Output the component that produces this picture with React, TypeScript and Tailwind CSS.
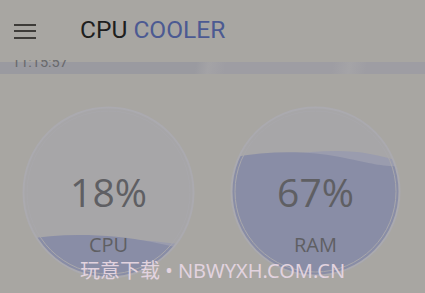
import React from "react";

function Gauge({
  size,
  value,
  label,
  wave,
  wave2,
}: {
  size: number;
  value: string;
  label: string;
  wave: string;
  wave2: string;
}) {
  const r = size / 2;
  const id = label.toLowerCase();
  return (
    <div className="grid shrink-0" style={{ width: size, height: size }}>
      <svg
        width={size}
        height={size}
        viewBox={`0 0 ${size} ${size}`}
        className="col-start-1 row-start-1"
      >
        <defs>
          <clipPath id={`clip-${id}`}>
            <circle cx={r} cy={r} r={r - 1} />
          </clipPath>
        </defs>
        <circle cx={r} cy={r} r={r - 1} fill="#a7a6a8" />
        <g clipPath={`url(#clip-${id})`}>
          <path d={wave2} fill="#9a9cae" />
          <path d={wave} fill="#898da6" />
        </g>
        <circle cx={r} cy={r} r={r - 1.5} fill="none" stroke="#abaaaf" strokeWidth="2" />
        <circle cx={r} cy={r} r={r - 5} fill="none" stroke="#a9a8ac" strokeWidth="1" />
      </svg>
      <div className="col-start-1 row-start-1 flex flex-col items-center font-['Open_Sans',sans-serif] font-normal text-[#5f5f63]">
        <div className="mt-[62px] text-[39px] leading-[48px]">{value}</div>
        <div className="mt-[20px] text-[20px] leading-[18px]">{label}</div>
      </div>
    </div>
  );
}

export default function App() {
  return (
    <div className="relative h-[293px] w-[425px] overflow-hidden bg-[#a8a6a2]">
      <header className="flex h-[62px] items-center">
        <div className="ml-[14px] flex w-[22px] flex-col gap-[4.5px]">
          <span className="block h-[2px] bg-[#3d3b38]" />
          <span className="block h-[2px] bg-[#3d3b38]" />
          <span className="block h-[2px] bg-[#3d3b38]" />
        </div>
        <h1 className="ml-[44px] mt-[-2px] font-['Roboto',sans-serif] text-[24.5px] leading-none">
          <span className="text-[#1e1e1e]">CPU</span>{" "}
          <span className="text-[#4c5a92]">COOLER</span>
        </h1>
      </header>
      <div className="absolute left-0 top-[54px] h-[20px] w-full">
        <div className="absolute left-0 top-[8px] h-[12px] w-full bg-[linear-gradient(100deg,#9a9aa0_0%,#9a9aa0_46%,#a4a3a6_49%,#9e9da3_53%,#9e9da3_78%,#a5a4a7_82%,#9e9da3_86%,#9e9da3_100%)]" />
        <div className="absolute left-[12px] top-[1px] font-['Roboto',sans-serif] text-[14.5px] leading-[16px] text-[#69696c]">
          11:15:57
        </div>
        <div className="absolute left-0 top-0 h-[6px] w-full bg-[#a8a6a2]" />
      </div>
      <div className="mt-[44px] flex pl-[22px]">
        <Gauge
          size={173}
          value="18%"
          label="CPU"
          wave="M0,134 C40,126 90,128 130,136 C150,140 160,143 173,146 L173,173 L0,173 Z"
          wave2="M0,138 C50,128 110,132 173,140 L173,173 L0,173 Z"
        />
        <div className="w-[35px] shrink-0" />
        <Gauge
          size={171}
          value="67%"
          label="RAM"
          wave="M0,52 C40,44 80,45 110,51 C140,57 152,61 171,60 L171,171 L0,171 Z"
          wave2="M0,56 C50,50 100,40 140,48 C155,51 165,54 171,55 L171,171 L0,171 Z"
        />
      </div>
      <div className="absolute left-[80px] top-[261px] font-['Noto_Sans','Noto_Sans_CJK_SC',sans-serif] text-[20px] leading-[20px] text-[#e2d3df]">
        玩意下载 • NBWYXH.COM.CN
      </div>
    </div>
  );
}
